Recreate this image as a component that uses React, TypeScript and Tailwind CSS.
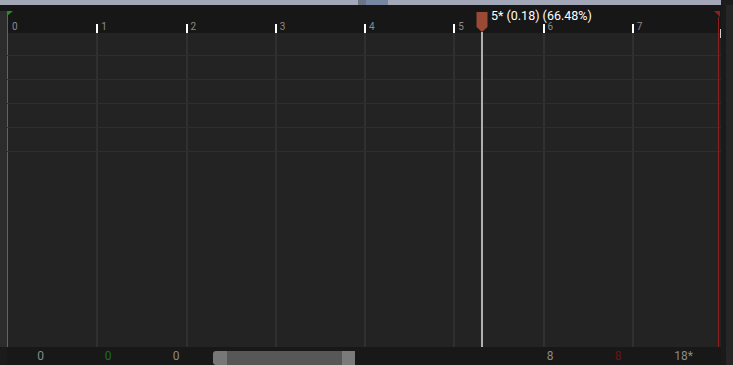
const labels = ["0", "1", "2", "3", "4", "5", "6", "7"];

function Playhead() {
  return (
    <div className="pointer-events-none absolute left-[469px] top-[7px] bottom-0 flex w-[12px] flex-col items-center">
      <svg width="12" height="20" viewBox="0 0 12 20">
        <path d="M1 0 H11 L11.5 0.5 V15 L6 20 L0.5 15 V0.5 Z" fill="#9a4935" />
      </svg>
      <div className="w-[2px] flex-1 bg-[#b0b0b0]" />
    </div>
  );
}

export default function App() {
  return (
    <div
      className="flex h-[365px] w-[733px] flex-col overflow-hidden bg-[#171717] text-[#8c8c8c]"
      style={{ fontFamily: "Roboto, 'Noto Sans', sans-serif" }}
    >
      {/* strip of the viewport above */}
      <div className="flex h-[5px] shrink-0">
        <div className="flex w-[721px]">
          <div className="w-[358px] bg-[#a3a8b8]" />
          <div className="w-[8px] bg-[#6f7484]" />
          <div className="w-[22px] bg-[#7786a3]" />
          <div className="flex-1 bg-[#a3a8b8]" />
        </div>
        <div className="flex-1 bg-[#1c1c1c]" />
      </div>

      <div className="flex min-h-0 flex-1">
        {/* left gutter */}
        <div className="flex w-[7px] flex-col">
          <div className="h-[6px] bg-[#171717]" />
          <div className="flex-1 bg-[#2c2c2c]" />
          <div className="h-[18px] bg-[#1b1b1b]" />
        </div>

        {/* track area */}
        <div className="relative flex w-[714px] flex-col">
          {/* ruler */}
          <div className="flex h-[28px] flex-col">
            <div className="h-[6px]" />
            <div className="grid flex-1 grid-cols-8">
              {labels.map((l, i) => (
                <div key={l} className="flex items-end">
                  <div className={i === 0 ? "h-[9px] w-[2px]" : "h-[9px] w-[2px] bg-white"} />
                  <span className="mb-px ml-[3px] text-[10px] leading-none text-[#8a8a8a]">{l}</span>
                </div>
              ))}
            </div>
          </div>

          {/* tracks */}
          <div className="relative flex-1 bg-[#232323]">
            <div className="grid h-full grid-cols-8">
              {labels.map((l, i) => (
                <div
                  key={l}
                  className={i === 0 ? "border-l border-[#2f8a2f]" : "border-l-2 border-[#303030]"}
                />
              ))}
            </div>
            <div className="pointer-events-none absolute inset-0 flex flex-col">
              <div className="h-[23px] shrink-0 border-b border-[#2e2e2e]" />
              <div className="h-[24px] shrink-0 border-b border-[#2e2e2e]" />
              <div className="h-[24px] shrink-0 border-b border-[#2e2e2e]" />
              <div className="h-[24px] shrink-0 border-b border-[#2e2e2e]" />
              <div className="h-[24px] shrink-0 border-b border-[#2e2e2e]" />
            </div>
          </div>

          {/* bottom bar */}
          <div className="flex h-[18px] items-center bg-[#181818] text-[12px] leading-none">
            <span className="w-[67px] text-center text-[#8a8a8a]">0</span>
            <span className="w-[68px] text-center text-[#1f6e1f]">0</span>
            <span className="w-[68px] text-center text-[#8a8a8a]">0</span>
            <div className="ml-[3px] flex h-[14px] w-[142px] self-end">
              <div className="w-[14px] rounded-l-[3px] bg-[#777]" />
              <div className="flex-1 bg-[#575757]" />
              <div className="w-[13px] bg-[#7a7a7a]" />
            </div>
            <span className="ml-[161px] w-[68px] text-center text-[#8a8a8a]">8</span>
            <span className="w-[68px] text-center text-[#6a1414]">8</span>
            <span className="w-[63px] text-center text-[#8a8a8a]">18*</span>
          </div>

          {/* green start marker */}
          <div className="pointer-events-none absolute left-0 top-[6px]">
            <svg width="6" height="5" viewBox="0 0 6 5">
              <path d="M0 0 H6 L0 5 Z" fill="#2a8a2a" />
            </svg>
          </div>
          <div className="pointer-events-none absolute left-0 top-[6px] h-[28px] w-px bg-[#2f8a2f]" />

          {/* red end marker */}
          <div className="pointer-events-none absolute right-[1px] top-[6px] bottom-[18px] flex flex-col items-end">
            <svg width="6" height="6" viewBox="0 0 6 6">
              <path d="M0 0 H6 V6 Z" fill="#8a1f1f" />
            </svg>
            <div className="mr-[1px] w-px flex-1 bg-[#8a2020]" />
          </div>
          <div className="pointer-events-none absolute right-0 top-[24px] h-[9px] w-px bg-[#d0d0d0]" />

          {/* playhead */}
          <div className="pointer-events-none absolute inset-x-0 top-0 bottom-[18px]">
            <Playhead />
            <span className="absolute left-[484px] top-[5px] whitespace-nowrap text-[12.5px] leading-[12px] text-white">
              5* (0.18) (66.48%)
            </span>
          </div>
        </div>

        {/* right gutter */}
        <div className="flex flex-1">
          <div className="w-[5px] bg-[#1a1a1a]" />
          <div className="flex-1 bg-[#262626]" />
        </div>
      </div>
    </div>
  );
}
